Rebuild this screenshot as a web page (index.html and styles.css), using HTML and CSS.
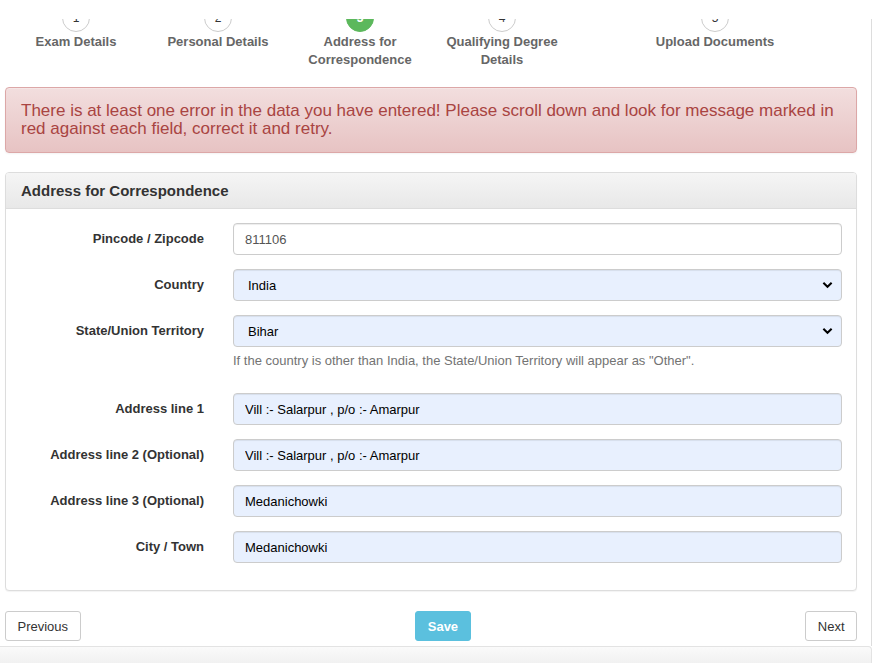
FILE: index.html
```html
<!DOCTYPE html>
<html lang="en">
<head>
<meta charset="utf-8">
<title>Address for Correspondence</title>
<link rel="stylesheet" href="styles.css">
</head>
<body>
<div class="topcover"></div>
<div class="page">
  <div class="content">
    <ol class="stepper">
      <li class="step"><span class="dot">1</span><span class="step-label">Exam Details</span></li>
      <li class="step"><span class="dot">2</span><span class="step-label">Personal Details</span></li>
      <li class="step active"><span class="dot">3</span><span class="step-label">Address for Correspondence</span></li>
      <li class="step"><span class="dot">4</span><span class="step-label">Qualifying Degree Details</span></li>
      <li class="step wide"><span class="dot">5</span><span class="step-label">Upload Documents</span></li>
    </ol>

    <div class="alert">There is at least one error in the data you have entered! Please scroll down and look for message marked in red against each field, correct it and retry.</div>

    <div class="panel">
      <div class="panel-heading">Address for Correspondence</div>
      <div class="panel-body">
        <div class="form-group">
          <label class="control-label">Pincode / Zipcode</label>
          <div class="control"><input class="form-control plain" type="text" value="811106"></div>
        </div>
        <div class="form-group">
          <label class="control-label">Country</label>
          <div class="control"><select class="form-control select filled"><option>India</option></select></div>
        </div>
        <div class="form-group help-group">
          <label class="control-label">State/Union Territory</label>
          <div class="control">
            <select class="form-control select filled"><option>Bihar</option></select>
            <p class="help-block">If the country is other than India, the State/Union Territory will appear as "Other".</p>
          </div>
        </div>
        <div class="form-group">
          <label class="control-label">Address line 1</label>
          <div class="control"><input class="form-control filled" type="text" value="Vill :- Salarpur , p/o :- Amarpur"></div>
        </div>
        <div class="form-group">
          <label class="control-label">Address line 2 (Optional)</label>
          <div class="control"><input class="form-control filled" type="text" value="Vill :- Salarpur , p/o :- Amarpur"></div>
        </div>
        <div class="form-group">
          <label class="control-label">Address line 3 (Optional)</label>
          <div class="control"><input class="form-control filled" type="text" value="Medanichowki"></div>
        </div>
        <div class="form-group last">
          <label class="control-label">City / Town</label>
          <div class="control"><input class="form-control filled" type="text" value="Medanichowki"></div>
        </div>
      </div>
    </div>

    <div class="actions">
      <button class="btn" type="button">Previous</button>
      <button class="btn btn-info" type="button">Save</button>
      <button class="btn" type="button">Next</button>
    </div>
  </div>
</div>
<div class="footer-bar"></div>
</body>
</html>
```

FILE: styles.css
```css
* { box-sizing: border-box; }

html, body {
  margin: 0;
  padding: 0;
  background: #fff;
  font-family: "Liberation Sans", Arial, sans-serif;
  font-size: 13px;
  color: #333;
  overflow: hidden;
}

.topcover {
  position: fixed;
  top: 0;
  left: 0;
  width: 100%;
  height: 19px;
  background: #fff;
  z-index: 5;
}

.page {
  width: 872px;
  border-right: 1px solid #ddd;
  height: 646px;
}

.content {
  width: 862px;
  padding-left: 5px;
}

.stepper {
  list-style: none;
  margin: 0;
  padding: 4px 0 0 0;
  display: grid;
  grid-template-columns: 142px 142px 142px 142px 284px;
  width: 852px;
}

.step {
  display: flex;
  flex-direction: column;
  align-items: center;
  text-align: center;
  padding: 0 10px;
}

.dot {
  width: 28px;
  height: 28px;
  border-radius: 50%;
  border: 1px solid #ccc;
  background: #fff;
  font-size: 12px;
  line-height: 26px;
  color: #333;
  text-align: center;
}

.step.active .dot {
  background: #5cb85c;
  border-color: #5cb85c;
  color: #fff;
  font-weight: bold;
}

.step-label {
  margin-top: 1px;
  font-weight: bold;
  font-size: 13px;
  line-height: 18px;
  color: #666;
}

.alert {
  margin-top: 18px;
  width: 852px;
  padding: 14px 15px;
  border: 1px solid #dca7a7;
  border-radius: 4px;
  background: linear-gradient(to bottom, #f2dede 0%, #e7c3c3 100%);
  box-shadow: inset 0 1px 0 rgba(255,255,255,.25), 0 1px 2px rgba(0,0,0,.05);
  color: #a94442;
  font-size: 17px;
  line-height: 18px;
}

.panel {
  margin-top: 19px;
  width: 852px;
  border: 1px solid #ddd;
  border-radius: 4px;
  background: #fff;
  box-shadow: 0 1px 1px rgba(0,0,0,.05);
}

.panel-heading {
  padding: 10px 15px;
  line-height: 15px;
  font-size: 15px;
  font-weight: bold;
  color: #333;
  background: linear-gradient(to bottom, #f5f5f5 0%, #e8e8e8 100%);
  border-bottom: 1px solid #ddd;
  border-radius: 3px 3px 0 0;
}

.panel-body {
  padding: 14px 0 13px 0;
}

.form-group {
  display: grid;
  grid-template-columns: 212px 1fr;
  margin-bottom: 14px;
}

.form-group.help-group { margin-bottom: 24px; }

.control-label {
  padding: 8px 14px 0 15px;
  text-align: right;
  font-weight: bold;
  font-size: 13px;
  line-height: 16px;
  color: #333;
}

.control {
  padding: 0 14px 0 15px;
}

.form-control {
  display: block;
  width: 100%;
  height: 32px;
  padding: 0 11px;
  border: 1px solid #ccc;
  border-radius: 4px;
  font-family: "Liberation Sans", Arial, sans-serif;
  font-size: 13px;
  color: #555;
  background: #fff;
  box-shadow: inset 0 1px 1px rgba(0,0,0,.075);
  outline: none;
}

.form-control.filled {
  background-color: #e8f0fe;
  color: #000;
}

.select {
  -webkit-appearance: none;
  appearance: none;
  padding-left: 14px;
  background-image: url("data:image/svg+xml;utf8,<svg xmlns='http://www.w3.org/2000/svg' width='12' height='8' viewBox='0 0 12 8'><path d='M1.5 1.5 L6 6 L10.5 1.5' fill='none' stroke='black' stroke-width='2.2'/></svg>");
  background-repeat: no-repeat;
  background-position: right 8px center;
  background-size: 11px 8px;
}

.help-block {
  margin: 5px 0 0 0;
  font-size: 13px;
  line-height: 17px;
  color: #737373;
}

.actions {
  margin-top: 20px;
  width: 852px;
  display: flex;
  justify-content: space-between;
}

.btn {
  height: 30px;
  padding: 0 11.5px;
  border: 1px solid #ccc;
  border-radius: 3px;
  background: #fff;
  font-family: "Liberation Sans", Arial, sans-serif;
  font-size: 13px;
  color: #333;
}

.btn-info {
  background: #5bc0de;
  border-color: #5bc0de;
  color: #fff;
  font-weight: bold;
}

.footer-bar {
  width: 872px;
  height: 20px;
  border: 1px solid #e3e3e3;
  border-left: none;
  border-radius: 0 4px 0 0;
  background: linear-gradient(to bottom, #fafafa 0%, #f0f0f0 100%);
}
```
